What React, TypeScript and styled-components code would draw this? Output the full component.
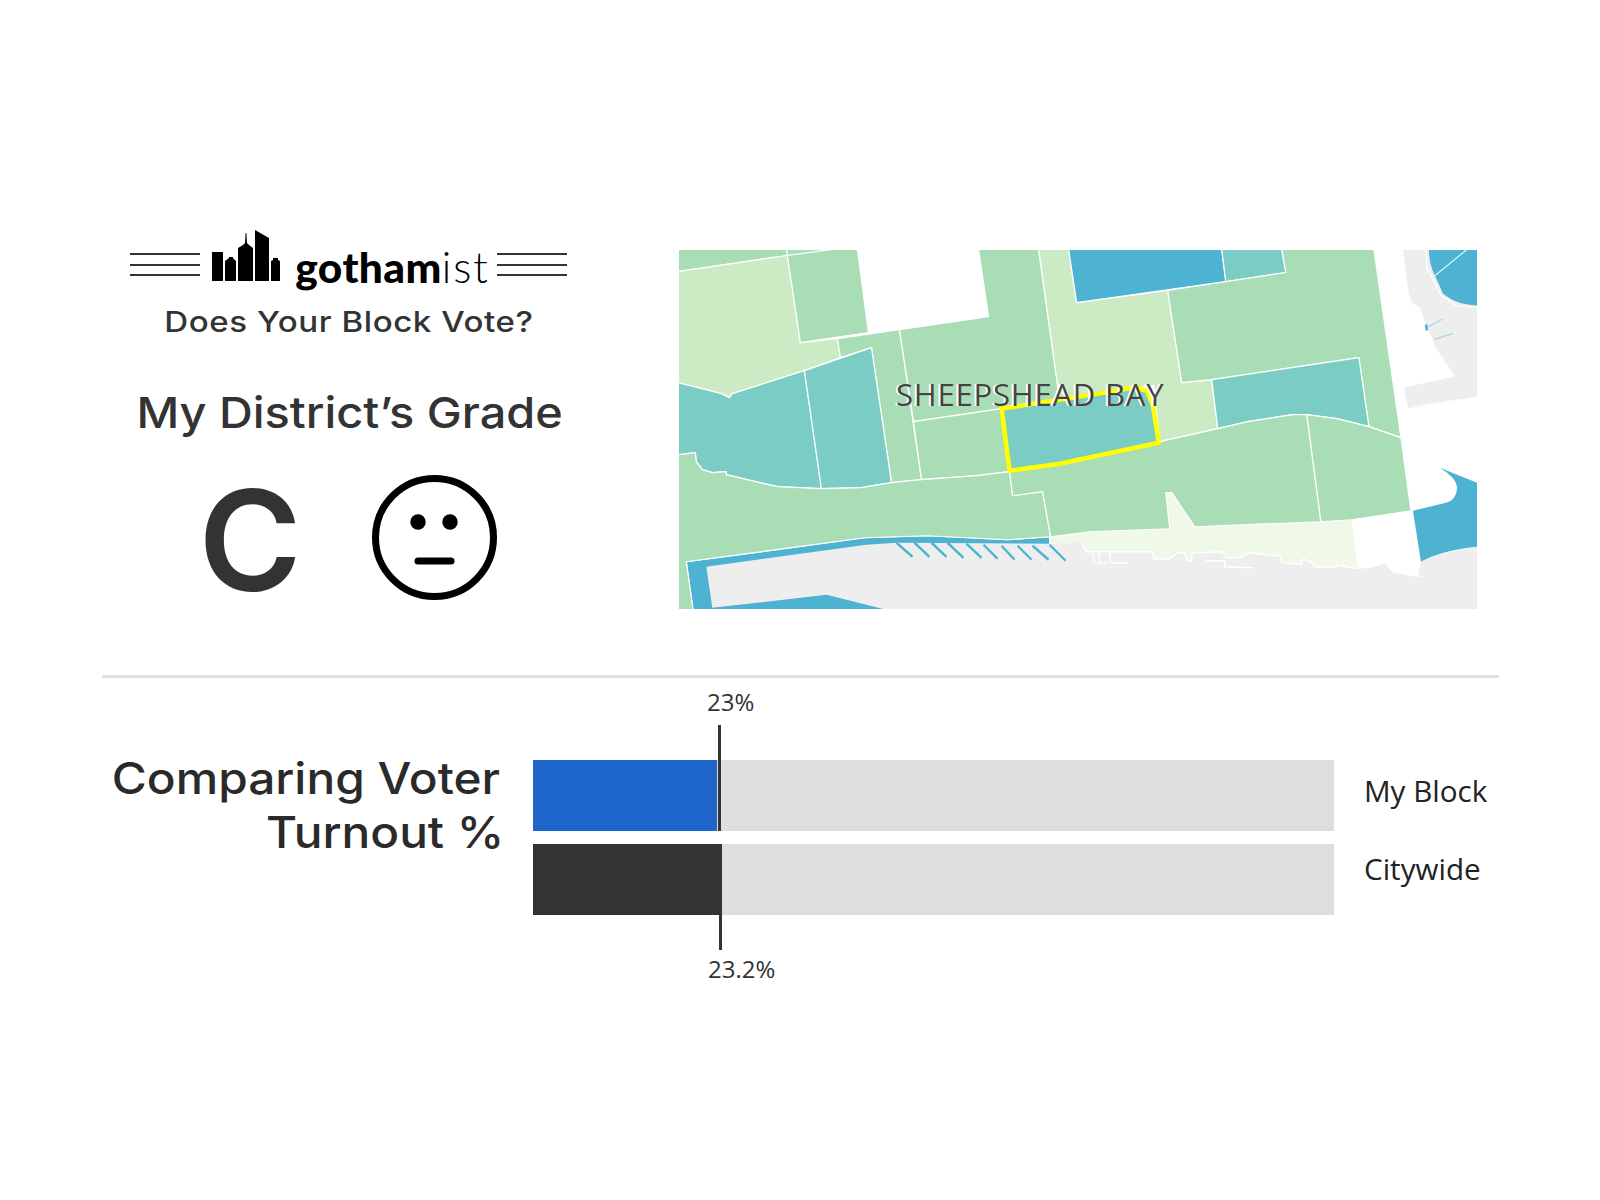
import React from "react";
import styled, { createGlobalStyle } from "styled-components";

const LIGHT = "#ccebc5";
const MEDIUM = "#a8ddb5";
const TEAL = "#7bccc4";
const BLUE = "#4eb3d3";
const PALE = "#f0f9e8";
const GRAY = "#eeeeee";

const GlobalStyle = createGlobalStyle`
  html, body {
    margin: 0;
    padding: 0;
    background: #ffffff;
  }
`;

// tract shapes, in page pixels (the svg viewBox starts at the map's corner)
const tracts: { fill: string; points: string }[] = [
  { fill: MEDIUM, points: "679,250 787,250 788,256 679,272" },
  { fill: MEDIUM, points: "787,250 833,250 788,256" },
  { fill: LIGHT, points: "679,272 788,256 801,343 838,339 841,358 805,371 733,394 730,398 722,394 679,383" },
  { fill: MEDIUM, points: "788,256 833,250 858,250 869,333 801,343" },
  { fill: MEDIUM, points: "838,339 900,330 922,480 892,483 872,348 841,358" },
  { fill: TEAL, points: "679,383 722,394 730,398 733,394 805,371 822,489 778,487 727,475 727,472 713,473 703,470 697,462 696,453 679,455" },
  { fill: TEAL, points: "805,371 872,348 892,483 862,488 822,489" },
  { fill: MEDIUM, points: "900,330 989,317 979,250 1039,250 1060,400 1002,409 914,422" },
  { fill: MEDIUM, points: "914,422 1002,409 1010,472 977,476 922,480" },
  { fill: LIGHT, points: "1039,250 1069,250 1077,303 1168,291 1182,383 1212,380 1218,429 1160,442 1154,386 1060,400" },
  { fill: BLUE, points: "1069,250 1222,250 1226,282 1077,303" },
  { fill: TEAL, points: "1222,250 1282,250 1286,273 1226,282" },
  { fill: MEDIUM, points: "1282,250 1374,250 1401,438 1369,427 1359,358 1212,380 1182,383 1168,291 1286,273" },
  { fill: TEAL, points: "1212,380 1359,358 1369,427 1337,419 1307,415 1293,415 1248,422 1218,429" },
  {
    fill: MEDIUM,
    points:
      "679,455 696,453 697,462 703,470 713,473 727,472 727,475 778,487 822,489 862,488 892,483 922,480 977,476 1010,472 1013,496 1043,492 1051,537 1008,540 928,536 865,538 687,562 694,612 679,612",
  },
  {
    fill: MEDIUM,
    points:
      "1010,472 1060,464 1160,442 1218,429 1248,422 1293,415 1307,415 1321,522 1195,527 1172,493 1166,493 1170,529 1090,532 1051,537 1043,492 1013,496",
  },
  { fill: MEDIUM, points: "1307,415 1337,419 1369,427 1401,438 1411,511 1352,520 1321,522" },
];

const SHORE =
  "1082,542 1084,547 1087,552 1153,552 1154,559 1170,559 1178,553 1185,553 1187,561 1192,561 1192,553 1198,553 1223,552 1226,558 1240,558 1250,553 1267,555 1280,556 1282,563 1302,565 1303,559 1313,563 1314,567 1337,567 1337,565 1358,569";

const hatches: number[][] = [
  [897, 543, 913, 557],
  [915, 543, 930, 557],
  [932, 543, 947, 557],
  [948, 543, 964, 558],
  [967, 544, 982, 558],
  [984, 545, 998, 559],
  [1002, 546, 1015, 560],
  [1018, 546, 1032, 560],
  [1033, 546, 1049, 560],
  [1050, 545, 1066, 561],
];

const skyline =
  "M212 252h11v29h-11zM225 261l4-3v-1h4v1l3 3v20h-11zM238 281v-33l5-3 2-2 .6-10h.8l.6 10 2 2 4 3v33zM255 230l14 8v43h-14zM271 261l2-1v-2h5v2l2 1v20h-9z";

export default function App() {
  return (
    <>
      <GlobalStyle />
      <Page>
        <TopRow>
          <Intro>
            <LogoRow>
              <Rules>
                <span />
                <span />
                <span />
              </Rules>
              <Skyline viewBox="212 230 68 52">
                <path d={skyline} fill="#000" />
              </Skyline>
              <Wordmark>
                gotham<Thin>ist</Thin>
              </Wordmark>
              <Rules>
                <span />
                <span />
                <span />
              </Rules>
            </LogoRow>
            <Subhead>Does Your Block Vote?</Subhead>
            <GradeTitle>My District’s Grade</GradeTitle>
            <GradeRow>
              <GradeLetter>C</GradeLetter>
              <Face viewBox="0 0 125 125">
                <circle cx="62.5" cy="62.5" r="59" fill="none" stroke="#000" strokeWidth="7" />
                <circle cx="46" cy="47" r="7.7" fill="#000" />
                <circle cx="78" cy="47" r="7.7" fill="#000" />
                <line x1="46" y1="86" x2="79" y2="86" stroke="#000" strokeWidth="7" strokeLinecap="round" />
              </Face>
            </GradeRow>
          </Intro>
          <MapFrame>
            <MapDrawing viewBox="679.7 250.7 797.3 358.3">
              <g stroke="#fff" strokeWidth="1.2" strokeLinejoin="round">
                {/* water frame and land along the bay */}
                <polygon fill={BLUE} points="687,562 865,538 928,536 1008,540 1050,537 1050,548 882,612 694,612" />
                <polygon
                  fill={GRAY}
                  stroke="none"
                  points={`707,567 867,545 897,543 1050,544 ${SHORE} 1372,568 1385,563 1388,568 1393,573 1417,577 1422,577 1418,575 1421,562 1437,555 1477,547 1477,612 895,612 827,595 713,608 713,612 713,608`}
                />
                <polygon
                  fill={PALE}
                  stroke="none"
                  points={`1051,537 1090,532 1170,529 1166,493 1172,493 1195,527 1321,522 1352,520 1358,569 ${SHORE.split(" ").reverse().join(" ")} 1050,544`}
                />
                <polyline fill="none" points={SHORE} strokeWidth="1.5" />
                <path
                  fill="none"
                  strokeWidth="1.5"
                  d="M1093 553l2 10M1099 553l1 10M1110 553l1 10M1098 563h10M1111 563h17M1206 561h19v6l29 1"
                />
                {tracts.map((tract, i) => (
                  <polygon key={i} fill={tract.fill} points={tract.points} />
                ))}
              </g>
              {hatches.map(([x1, y1, x2, y2], i) => (
                <g key={i}>
                  <line x1={x1 + 1} y1={y1} x2={x2 + 1} y2={y2} stroke="#fff" strokeWidth="1" />
                  <line x1={x1} y1={y1} x2={x2} y2={y2} stroke={BLUE} strokeWidth="2.4" />
                </g>
              ))}
              {/* selected block */}
              <polygon
                fill={TEAL}
                stroke="#ffff00"
                strokeWidth="4.5"
                points="1002,409 1093,395 1135,388 1147,391 1153,405 1159,443 1060,464 1010,471"
              />
              {/* east side: inlet and piers */}
              <path fill={BLUE} d="M1413 511L1446 503Q1457 500 1457 487Q1456 478 1440 468L1477 483V547Q1440 551 1421 562Z" />
              <polygon
                fill={GRAY}
                points="1403,250 1477,250 1477,397 1413,408 1408,408 1404,388 1455,377 1435,347 1433,340 1427,328 1420,308 1413,304 1409,295"
              />
              <path fill={BLUE} d="M1429 250H1477V306Q1457 305 1447 297L1443 294L1435 276Q1429 265 1429 250Z" />
              <line x1="1435" y1="276" x2="1467" y2="250" stroke="#fff" strokeWidth="1" />
              <polyline fill="none" stroke="#fff" strokeWidth="1.2" points="1426,250 1427,268 1432,278 1441,296 1448,300 1456,306 1477,308" />
              <line x1="1427" y1="328" x2="1443" y2="319" stroke="#a9dcec" strokeWidth="1.5" />
              <line x1="1434" y1="340" x2="1453" y2="334" stroke="#a9dcec" strokeWidth="1.5" />
              <line x1="1426" y1="325" x2="1427" y2="331" stroke={BLUE} strokeWidth="2.5" />
              <line x1="1413" y1="407" x2="1458" y2="400" stroke="#fff" strokeWidth="1" />
            </MapDrawing>
            <MapLabel>SHEEPSHEAD BAY</MapLabel>
          </MapFrame>
        </TopRow>
        <Divider />
        <CompareRow>
          <CompareTitle>
            Comparing Voter
            <br />
            <TitleEnd>Turnout %</TitleEnd>
          </CompareTitle>
          <Chart>
            <PercentTop>23%</PercentTop>
            <BarStack>
              <Track>
                <Fill $color="#1f66cc" $width={184} />
              </Track>
              <Track>
                <Fill $color="#333333" $width={189} />
              </Track>
              <Marker $left={185} $top={0} $height={106} />
              <Marker $left={186} $top={190} $height={35} />
            </BarStack>
            <PercentBottom>23.2%</PercentBottom>
          </Chart>
          <Legend>
            <LegendItem>My Block</LegendItem>
            <LegendItem>Citywide</LegendItem>
          </Legend>
        </CompareRow>
      </Page>
    </>
  );
}

const Page = styled.div`
  width: 1600px;
  height: 1200px;
  padding-top: 230px;
  box-sizing: border-box;
  overflow: hidden;
  background: #ffffff;
  color: #333333;
`;

const TopRow = styled.div`
  display: flex;
  align-items: flex-start;
  padding-left: 130px;
`;

const Intro = styled.div`
  width: 437px;
  display: flex;
  flex-direction: column;
  align-items: center;
`;

const LogoRow = styled.div`
  width: 100%;
  height: 62px;
  display: flex;
  align-items: flex-start;
  justify-content: space-between;
`;

const Rules = styled.div`
  width: 70px;
  margin-top: 23px;
  display: flex;
  flex-direction: column;
  gap: 8.5px;

  span {
    display: block;
    height: 2px;
    background: #333333;
  }
`;

const Skyline = styled.svg`
  width: 68px;
  height: 52px;
  margin-left: 12px;
  flex: none;
`;

const Wordmark = styled.div`
  margin: 12px 7px 0 15px;
  font-family: Lato, sans-serif;
  font-size: 42.5px;
  line-height: 50px;
  font-weight: 900;
  letter-spacing: 0.4px;
  color: #000000;
  white-space: nowrap;
`;

const Thin = styled.span`
  font-weight: 300;
  letter-spacing: 2px;
`;

// Inter is narrower than the geometric face in the picture, so headings are widened
const Subhead = styled.h2`
  margin: 10px 0 0;
  font-family: Inter, sans-serif;
  font-size: 29px;
  line-height: 40px;
  font-weight: 500;
  letter-spacing: 0.5px;
  color: #333333;
  white-space: nowrap;
  transform: scaleX(1.14);
`;

const GradeTitle = styled.h1`
  margin: 43px 0 0 3px;
  font-family: Inter, sans-serif;
  font-size: 43px;
  line-height: 54px;
  font-weight: 500;
  color: #333333;
  white-space: nowrap;
  transform: scaleX(1.09);
`;

const GradeRow = styled.div`
  margin-top: 33px;
  margin-left: -2px;
  display: flex;
  align-items: center;
  gap: 70px;
`;

const GradeLetter = styled.div`
  margin-top: 6px;
  font-family: Inter, sans-serif;
  font-size: 140px;
  line-height: 125px;
  font-weight: 600;
  color: #333333;
`;

const Face = styled.svg`
  width: 125px;
  height: 125px;
  flex: none;
`;

const MapFrame = styled.div`
  position: relative;
  width: 798px;
  height: 359px;
  margin: 20px 0 0 112px;
  flex: none;
`;

const MapDrawing = styled.svg`
  display: block;
  width: 100%;
  height: 100%;
`;

const MapLabel = styled.div`
  position: absolute;
  left: 217px;
  top: 123px;
  font-family: "Open Sans", sans-serif;
  font-size: 31px;
  line-height: 42px;
  letter-spacing: 0.8px;
  color: #444444;
  text-shadow: -2px 0 0 #ffffff;
  white-space: nowrap;
`;

const Divider = styled.div`
  width: 1397px;
  height: 3px;
  margin: 66px 0 0 102px;
  background: #e0e0e0;
`;

const CompareRow = styled.div`
  display: flex;
  align-items: flex-start;
  padding-left: 102px;
`;

const CompareTitle = styled.h2`
  width: 398px;
  margin: 73px 0 0;
  font-family: Inter, sans-serif;
  font-size: 44px;
  line-height: 54px;
  font-weight: 500;
  text-align: right;
  color: #2a2a2a;
  white-space: nowrap;
  transform: scaleX(1.086);
  transform-origin: right center;
`;

const TitleEnd = styled.span`
  display: inline-block;
  margin-right: -4px;
`;

const Chart = styled.div`
  width: 801px;
  margin-left: 33px;
`;

const Percent = styled.div`
  font-family: "Open Sans", sans-serif;
  font-size: 24px;
  line-height: 32px;
  color: #333333;
`;

const PercentTop = styled(Percent)`
  margin: 8px 0 0 174px;
  height: 39px;
`;

const PercentBottom = styled(Percent)`
  margin: 3px 0 0 175px;
`;

const BarStack = styled.div`
  position: relative;
  display: flex;
  flex-direction: column;
  gap: 13px;
  padding: 35px 0;
`;

const Track = styled.div`
  height: 71px;
  background: #dedede;
`;

const Fill = styled.div<{ $color: string; $width: number }>`
  height: 100%;
  width: ${(p) => p.$width}px;
  background: ${(p) => p.$color};
`;

const Marker = styled.div<{ $left: number; $top: number; $height: number }>`
  position: absolute;
  left: ${(p) => p.$left}px;
  top: ${(p) => p.$top}px;
  width: 3px;
  height: ${(p) => p.$height}px;
  background: #333333;
`;

const Legend = styled.div`
  margin: 74px 0 0 30px;
  font-family: "Open Sans", sans-serif;
  font-size: 29.6px;
  line-height: 78px;
  color: #222222;
`;

const LegendItem = styled.div`
  white-space: nowrap;
`;
